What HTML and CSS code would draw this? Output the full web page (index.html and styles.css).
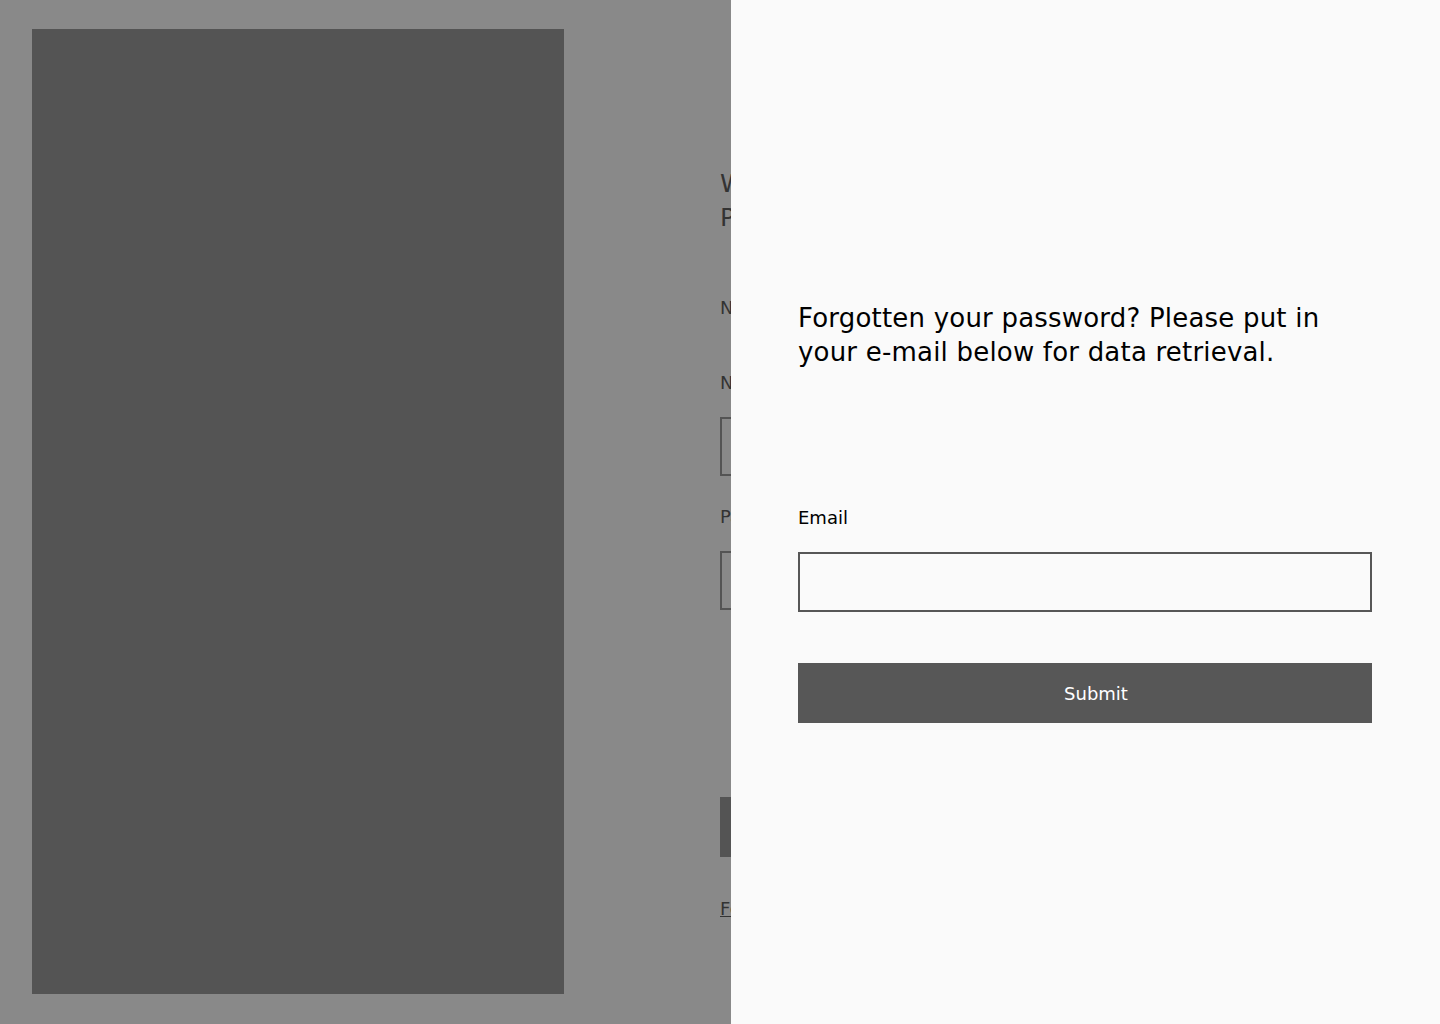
FILE: index.html
```html
<!DOCTYPE html>
<html lang="en">
<head>
<meta charset="utf-8">
<title>Forgotten password</title>
<link rel="stylesheet" href="styles.css">
</head>
<body>
<div class="page">
  <div class="hero"></div>
  <div class="login">
    <h1 class="login-title">Welcome back<br>Please sign in</h1>
    <p class="login-note">No account yet? Register here</p>
    <label class="login-label">Name</label>
    <div class="login-input"></div>
    <label class="login-label">Password</label>
    <div class="login-input"></div>
    <div class="login-btn"></div>
    <a class="login-link" href="#">Forgot password?</a>
  </div>
</div>
<div class="overlay"></div>
<aside class="drawer">
  <h2 class="drawer-title">Forgotten your password? Please put in your e-mail below for data retrieval.</h2>
  <form class="drawer-form">
    <label class="field-label" for="email">Email</label>
    <input class="field-input" id="email" type="email">
    <button class="submit" type="button">Submit</button>
  </form>
</aside>
</body>
</html>
```
FILE: styles.css
```css
* { box-sizing: border-box; }
html, body { margin: 0; height: 100%; }
body {
  font-family: "DejaVu Sans", "Liberation Sans", sans-serif;
  background: #fafafa;
  color: #000;
  overflow: hidden;
}
.page {
  display: flex;
  height: 1024px;
  padding: 29px 0 30px 32px;
}
.hero {
  width: 532px;
  background: #999;
  flex: none;
}
.login {
  margin-left: 156px;
  padding-top: 138px;
  display: flex;
  flex-direction: column;
  align-items: flex-start;
  color: #5e5e5e;
}
.login-title {
  font-weight: 400;
  font-size: 25px;
  line-height: 34px;
  margin: 0 0 61px;
}
.login-note { margin: 0 0 51px; font-size: 18px; line-height: 24px; }
.login-label { font-size: 18px; line-height: 24px; margin-bottom: 22px; }
.login-input { width: 574px; height: 59px; border: 2px solid #999; margin-bottom: 29px; }
.login-btn { width: 574px; height: 60px; background: #999; margin-top: 158px; }
.login-link { margin-top: 40px; color: #5e5e5e; font-size: 18px; line-height: 24px; }
.overlay {
  position: fixed;
  inset: 0;
  background: rgba(0, 0, 0, 0.45);
}
.drawer {
  position: fixed;
  top: 0;
  right: 0;
  bottom: 0;
  width: 709px;
  background: #fafafa;
  padding: 301px 68px 0 67px;
}
.drawer-title {
  margin: 0;
  font-weight: 400;
  font-size: 26px;
  line-height: 34px;
  letter-spacing: 0.2px;
}
.drawer-form {
  display: flex;
  flex-direction: column;
  margin-top: 137px;
}
.field-label {
  font-size: 18px;
  line-height: 24px;
}
.field-input {
  margin-top: 22px;
  height: 60px;
  border: 2px solid #575757;
  background: #fafafa;
  font: inherit;
  outline: none;
}
.submit {
  margin-top: 51px;
  height: 60px;
  border: 0;
  background: #575757;
  color: #fff;
  font-family: inherit;
  font-size: 18px;
  padding-left: 28px;
}
```
